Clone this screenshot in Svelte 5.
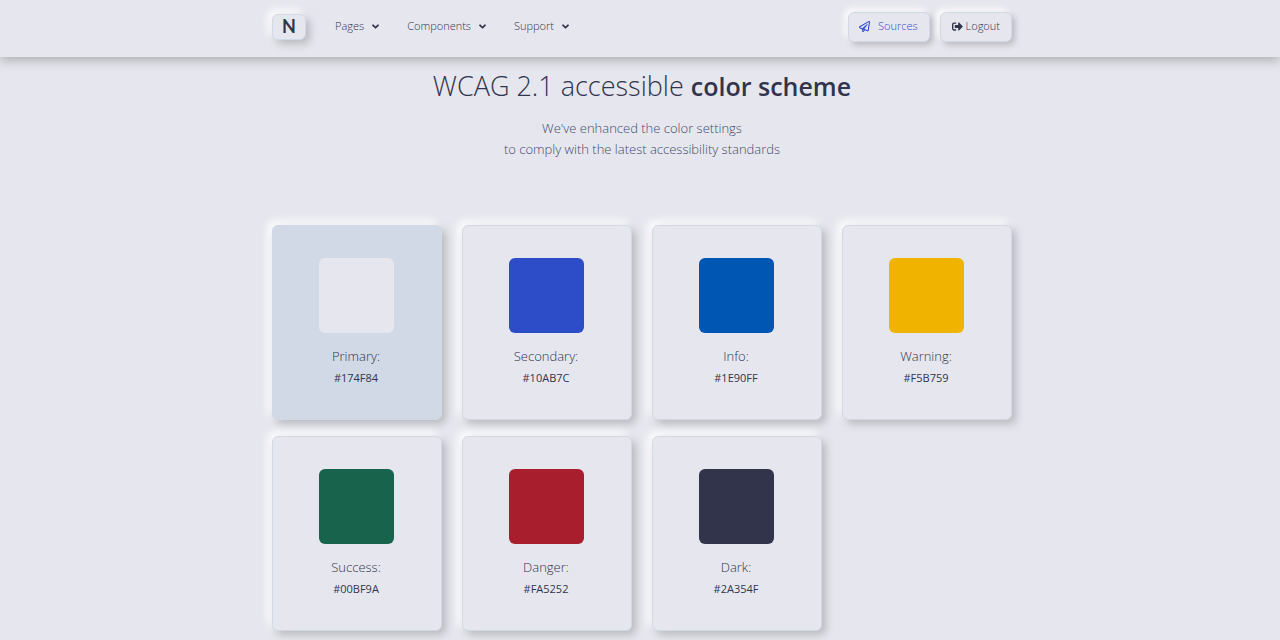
<script>
  const menus = ['Pages', 'Components', 'Support'];
  const colors = [
    { name: 'Primary', code: '#174F84', fill: '#e6e7ee', active: true },
    { name: 'Secondary', code: '#10AB7C', fill: '#2d4cc8' },
    { name: 'Info', code: '#1E90FF', fill: '#0056b3' },
    { name: 'Warning', code: '#F5B759', fill: '#f0b400' },
    { name: 'Success', code: '#00BF9A', fill: '#18634b' },
    { name: 'Danger', code: '#FA5252', fill: '#a91e2c' },
    { name: 'Dark', code: '#2A354F', fill: '#31344b' }
  ];
</script>

<header class="bar">
  <nav class="container nav">
    <a class="logo raised" href="#home">N</a>
    <ul class="menus">
      {#each menus as menu}
        <li>
          <button class="menu" type="button" aria-haspopup="true">
            {menu}
            <svg class="chevron" viewBox="0 0 320 512" aria-hidden="true">
              <path d="M143 352.3L7 216.3c-9.4-9.4-9.4-24.6 0-33.9l22.6-22.6c9.4-9.4 24.6-9.4 33.9 0l96.4 96.4 96.4-96.4c9.4-9.4 24.6-9.4 33.9 0l22.6 22.6c9.4 9.4 9.4 24.6 0 33.9l-136 136c-9.2 9.4-24.4 9.4-33.8 0z" />
            </svg>
          </button>
        </li>
      {/each}
    </ul>
    <div class="actions">
      <a class="btn raised sources" href="#sources">
        <svg viewBox="0 0 512 512" aria-hidden="true">
          <path d="M440 6.5L24 246.4c-34.4 19.9-31.1 70.8 5.7 85.9L144 379.6V464c0 46.4 59.2 65.5 86.6 28.6l43.8-59.1 111.9 46.2c5.9 2.4 12.1 3.6 18.3 3.6 8.2 0 16.3-2.1 23.6-6.2 12.8-7.2 21.6-20 23.9-34.5l59.4-387.2c6.1-40.1-36.9-68.8-71.5-48.9zM192 464v-64.6l36.6 15.1L192 464zm212.6-28.7l-153.8-63.5L391 169.5c10.7-15.5-9.5-33.5-23.7-21.2L155.8 332.6 48 288 464 48l-59.4 387.3z" />
        </svg>
        Sources
      </a>
      <button class="btn raised logout" type="button">
        <svg viewBox="0 0 512 512" aria-hidden="true">
          <path d="M497 273L329 441c-15 15-41 4.5-41-17v-96H152c-13.3 0-24-10.7-24-24v-96c0-13.3 10.7-24 24-24h136V88c0-21.4 25.9-32 41-17l168 168c9.3 9.4 9.3 24.6 0 34zM192 436v-40c0-6.6-5.4-12-12-12H96c-17.7 0-32-14.3-32-32V160c0-17.7 14.3-32 32-32h84c6.6 0 12-5.4 12-12V76c0-6.6-5.4-12-12-12H96c-53 0-96 43-96 96v192c0 53 43 96 96 96h84c6.6 0 12-5.4 12-12z" />
        </svg>
        Logout
      </button>
    </div>
  </nav>
</header>

<main class="container">
  <section class="intro">
    <h1>WCAG 2.1 accessible <strong>color scheme</strong></h1>
    <p>We've enhanced the color settings<br />to comply with the latest accessibility standards</p>
  </section>
  <ul class="grid">
    {#each colors as color}
      <li class="card raised" class:active={color.active}>
        <div class="swatch" style="background: {color.fill}"></div>
        <h2>{color.name}:</h2>
        <span class="code">{color.code}</span>
      </li>
    {/each}
  </ul>
</main>

<style>
  :global(body) {
    background: #e6e7ee;
    color: #31344b;
    font-family: 'Open Sans', 'Noto Sans', sans-serif;
    font-weight: 300;
  }
  ul {
    list-style: none;
    margin: 0;
    padding: 0;
  }
  a,
  button {
    color: inherit;
    font: inherit;
    text-decoration: none;
    cursor: pointer;
  }
  .container {
    box-sizing: border-box;
    max-width: 776px;
    margin: 0 auto;
    padding: 0 16px 0 20px;
  }
  .raised {
    border: 1px solid #d1d9e6;
    background: #e6e7ee;
    box-shadow: 3px 3px 6px #b8b9be, -3px -3px 6px #fff;
  }
  .bar {
    padding: 12px 0 15px;
    background: #e6e7ee;
    box-shadow: 0 4px 10px #b0b1b6;
    font-size: 11px;
    line-height: 14px;
  }
  .nav {
    display: flex;
    align-items: center;
  }
  .logo {
    box-sizing: border-box;
    width: 34px;
    height: 26px;
    border-radius: 6px;
    font-family: Lato, sans-serif;
    font-size: 18px;
    font-weight: 700;
    line-height: 23px;
    text-align: center;
    box-shadow: 4px 4px 8px #b8b9be, -4px -4px 8px #fff;
  }
  .menus {
    display: flex;
    gap: 28px;
    margin-left: 29px;
    padding-bottom: 2px;
  }
  .menu {
    display: flex;
    align-items: center;
    gap: 8px;
    padding: 0;
    border: 0;
    background: none;
  }
  .chevron {
    width: 7px;
    height: 11px;
    fill: currentColor;
  }
  .actions {
    display: flex;
    gap: 10px;
    margin-left: auto;
  }
  .btn {
    display: flex;
    align-items: center;
    padding: 6px 11px 8px;
    border-radius: 6px;
  }
  .btn svg {
    width: 11px;
    height: 11px;
    fill: currentColor;
  }
  .sources {
    gap: 8px;
    padding: 6px 11px 8px 10px;
    color: #2d4cc8;
  }
  .logout {
    gap: 3px;
  }
  .intro {
    padding: 11px 0 65px;
    text-align: center;
  }
  h1 {
    margin: 0 0 15px;
    font-size: 27px;
    font-weight: 300;
    line-height: 35px;
  }
  strong {
    font-size: 25px;
    font-weight: 600;
    line-height: 32px;
  }
  p {
    margin: 0;
    color: #44476a;
    font-size: 13px;
    line-height: 21px;
  }
  .grid {
    display: grid;
    grid-template-columns: repeat(auto-fill, minmax(160px, 1fr));
    gap: 16px 20px;
    padding-bottom: 16px;
  }
  .card {
    display: flex;
    flex-direction: column;
    align-items: center;
    padding: 32px 17px 33px 15px;
    border-radius: 6px;
    box-shadow: 4px 4px 8px #b8b9be, -4px -4px 8px #fff;
  }
  .active {
    background: #d1d9e6;
  }
  .swatch {
    width: 75px;
    height: 75px;
    margin-bottom: 14px;
    border-radius: 6px;
  }
  h2 {
    margin: 0 0 4px;
    font-size: 13px;
    font-weight: 300;
    line-height: 18px;
  }
  .code {
    font-size: 11px;
    font-weight: 400;
    line-height: 17px;
  }
</style>
